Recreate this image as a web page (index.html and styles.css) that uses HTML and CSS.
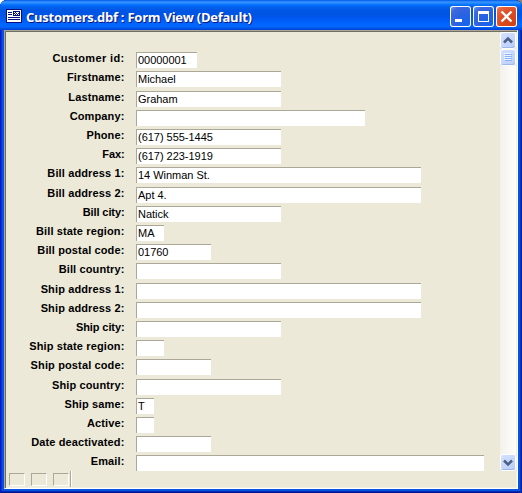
FILE: index.html
```html
<!DOCTYPE html>
<html lang="en">
<head>
<meta charset="utf-8">
<title>Customers.dbf : Form View (Default)</title>
<link rel="stylesheet" href="styles.css">
</head>
<body>
<div class="window">
  <header class="titlebar">
    <svg class="app-icon" width="16" height="14" viewBox="0 0 16 14" shape-rendering="crispEdges">
      <path fill="#06107c" d="M0 0h16v14H0z"/>
      <path fill="#fff" d="M1 1h14v12H1z"/>
      <path fill="#06107c" d="M2 3h4v1H2zM2 5h4v1H2zM2 8h12v1H2zM2 10h12v1H2zM7 2h7v5H7z"/>
      <path fill="#fff" d="M8 3h1v1H8zM10 3h2v1h-2zM12 3h1v1h-1zM9 4h1v1H9zM11 4h1v1h-1zM8 5h1v1H8zM10 5h1v1h-1zM12 5h1v1h-1z"/>
    </svg>
    <h1 class="title">Customers.dbf : Form View (Default)</h1>
    <div class="controls">
      <svg class="control" width="21" height="21" viewBox="0 0 21 21"><rect x="5" y="13" width="7" height="3" fill="#fff"/></svg>
      <svg class="control" width="21" height="21" viewBox="0 0 21 21"><path d="M5 5h11v11H5zM6 8v7h9V8z" fill="#fff" fill-rule="evenodd"/></svg>
      <svg class="control close" width="21" height="21" viewBox="0 0 21 21"><path d="M5.5 5.5l10 10M15.5 5.5l-10 10" stroke="#fff" stroke-width="2.3"/></svg>
    </div>
  </header>
  <main class="client">
    <div class="form">
      <div class="row"><label class="loose">Customer id:</label><span class="field id">00000001</span></div>
      <div class="row"><label>Firstname:</label><span class="field medium">Michael</span></div>
      <div class="row"><label>Lastname:</label><span class="field medium">Graham</span></div>
      <div class="row"><label>Company:</label><span class="field company"></span></div>
      <div class="row"><label>Phone:</label><span class="field medium">(617) 555-1445</span></div>
      <div class="row"><label class="tight">Fax:</label><span class="field medium">(617) 223-1919</span></div>
      <div class="row"><label>Bill address 1:</label><span class="field address">14 Winman St.</span></div>
      <div class="row"><label>Bill address 2:</label><span class="field address">Apt 4.</span></div>
      <div class="row"><label class="tight">Bill city:</label><span class="field medium">Natick</span></div>
      <div class="row"><label>Bill state region:</label><span class="field state">MA</span></div>
      <div class="row"><label>Bill postal code:</label><span class="field short">01760</span></div>
      <div class="row"><label>Bill country:</label><span class="field medium"></span></div>
      <div class="row"><label>Ship address 1:</label><span class="field address"></span></div>
      <div class="row"><label>Ship address 2:</label><span class="field address"></span></div>
      <div class="row"><label class="tight">Ship city:</label><span class="field medium"></span></div>
      <div class="row"><label>Ship state region:</label><span class="field state"></span></div>
      <div class="row"><label>Ship postal code:</label><span class="field short"></span></div>
      <div class="row"><label>Ship country:</label><span class="field medium"></span></div>
      <div class="row"><label>Ship same:</label><span class="field flag">T</span></div>
      <div class="row"><label>Active:</label><span class="field flag"></span></div>
      <div class="row"><label>Date deactivated:</label><span class="field short"></span></div>
      <div class="row"><label>Email:</label><span class="field email"></span></div>
    </div>
    <div class="scrollbar">
      <svg class="scroll-part" width="16" height="17" viewBox="0 0 16 17"><path d="M4 10.5l4-4 4 4" fill="none" stroke="#4d6185" stroke-width="2.6"/></svg>
      <svg class="scroll-part" width="16" height="17" viewBox="0 0 16 17" shape-rendering="crispEdges"><path d="M4 4h7v1H4zM4 6h7v1H4zM4 8h7v1H4zM4 10h7v1H4z" fill="#eef4fe"/><path d="M5 5h7v1H5zM5 7h7v1H5zM5 9h7v1H5zM5 11h7v1H5z" fill="#8cb0f8"/></svg>
      <svg class="scroll-part down" width="16" height="17" viewBox="0 0 16 17"><path d="M4 6.5l4 4 4-4" fill="none" stroke="#4d6185" stroke-width="2.6"/></svg>
    </div>
    <footer class="status"><i></i><i></i><i></i><b></b></footer>
  </main>
</div>
</body>
</html>
```
FILE: styles.css
```css
* { box-sizing: border-box; }
body { margin: 0; background: linear-gradient(90deg, #fff 50%, #8a8272 50%); }
.window {
  width: 522px;
  height: 493px;
  padding: 0 4px 4px;
  border-radius: 7px 7px 0 0;
  background: #0852e0;
  box-shadow: inset 1px 0 #0019cf, inset -1px 0 #001ea0, inset -2px 0 #0034c4, inset 0 -1px #001590, inset 0 -2px #0029b8, inset 2px 0 #0831d9;
  overflow: hidden;
}
.titlebar {
  display: flex;
  align-items: flex-start;
  height: 30px;
  margin: 0 -4px;
  padding: 6px 5px 0 6px;
  background: linear-gradient(#0058e6 0, #3a93ff 2px, #288eff 3px, #127dff 4px, #036ffc 5px, #0262ee 7px, #0057e5 10px, #0054e3 14px, #0055eb 17px, #005bf5 20px, #0066ff 24px, #0066fc 27px, #0059e6 28px, #003dd7 30px);
}
.app-icon { margin-top: 3px; }
.title {
  flex: 1;
  margin: 3px 0 0 4px;
  color: #fff;
  font: 700 13px/17px "Open Sans", "Noto Sans", sans-serif;
  letter-spacing: -0.25px;
  text-shadow: 1px 1px #0a1883;
  white-space: nowrap;
}
.controls { display: flex; gap: 2px; }
.control {
  border-radius: 3px;
  background: radial-gradient(circle at 85% 90%, #1464ee 0, #2a62e2 45%, #3c68dc 75%, #7b9cee 100%);
  box-shadow: inset 0 0 0 1px #fff;
}
.control.close { background: radial-gradient(circle at 85% 90%, #d34013 0, #dc4a20 50%, #e3633e 80%, #f0a48a 100%); }
.client {
  display: grid;
  grid-template: 439px 1fr / 1fr 16px;
  height: 459px;
  padding: 1px;
  border: 1px solid #fff;
  border-top-color: #aca899;
  border-left-color: #aca899;
  background: #ece9d8;
  box-shadow: inset 1px 1px #716f64, inset -1px -1px #f1efe2;
}
.form { padding-top: 20px; }
.row { display: flex; height: 19px; }
.row:nth-child(5n+2) { height: 20px; }
label {
  width: 118.5px;
  margin-right: 11.5px;
  color: #000;
  font: 700 11px/13px "Liberation Sans", sans-serif;
  letter-spacing: 0.13px;
  text-align: right;
  white-space: nowrap;
}
.loose { letter-spacing: 0.35px; }
.tight { letter-spacing: -0.1px; }
.field {
  height: 16px;
  padding-left: 1px;
  border: solid #aca899;
  border-width: 1px 0 0 1px;
  background: #fff;
  color: #000;
  font: 11px/15px "Liberation Sans", sans-serif;
  letter-spacing: -0.03px;
  white-space: nowrap;
}
.id { width: 61px; }
.medium { width: 145px; }
.company { width: 229px; }
.address { width: 285px; }
.state { width: 28px; }
.short { width: 75px; }
.flag { width: 18px; }
.email { width: 348px; }
.scrollbar {
  display: flex;
  flex-direction: column;
  background: linear-gradient(90deg, #f3f1ec, #fefefb);
}
.scroll-part {
  border-radius: 3px;
  background: linear-gradient(135deg, #d6e2fe, #b8ccfb);
  box-shadow: inset 0 0 0 1px #fff, inset -1px -2px #9cb7e8;
}
.down { margin-top: auto; }
.status {
  grid-column: 1 / -1;
  display: flex;
  gap: 6px;
  padding: 2px 0 0 3px;
}
.status i {
  width: 16px;
  height: 13px;
  border: 1px solid #fff;
  border-top-color: #aca899;
  border-left-color: #aca899;
}
.status b {
  width: 2px;
  height: 16px;
  margin: -2px 0 0 -5px;
  border-left: 1px solid #aca899;
  border-right: 1px solid #fff;
}
```
